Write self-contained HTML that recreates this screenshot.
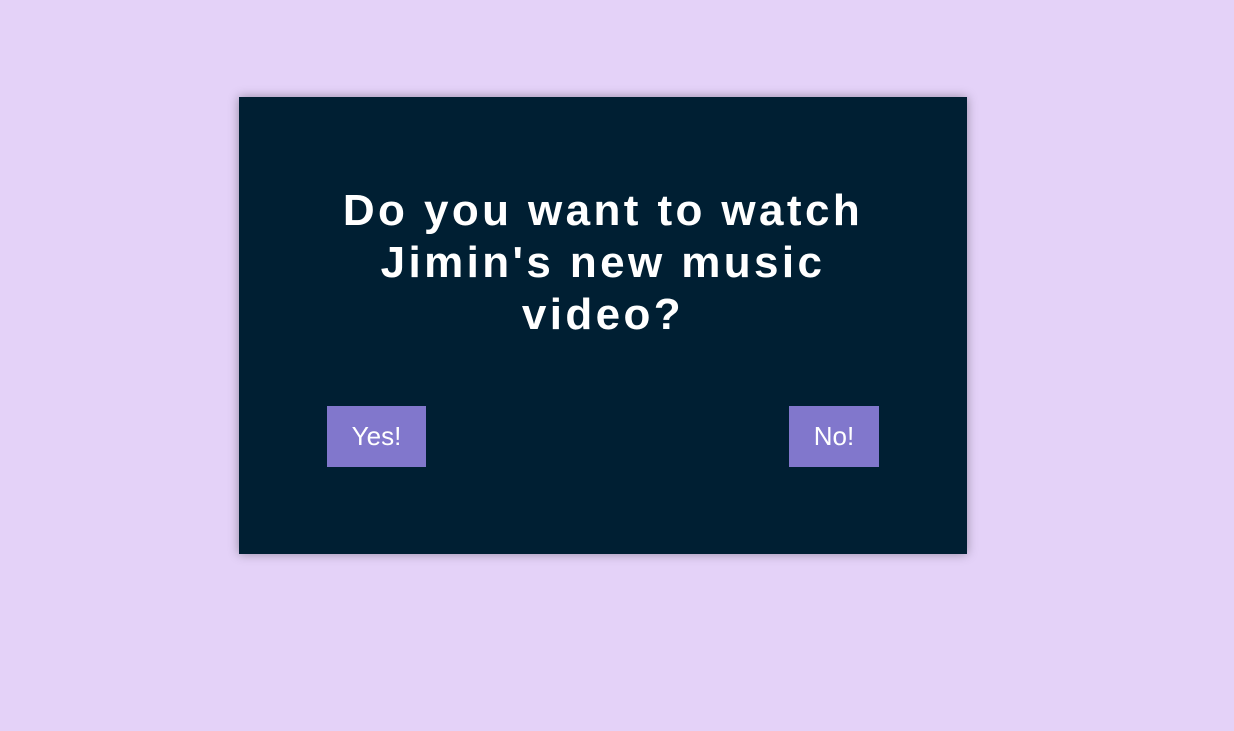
<!DOCTYPE html>
<html><head><style>
html,body{margin:0;padding:0;width:1234px;height:731px;background:#e4d2f8;overflow:hidden}
.card{position:absolute;left:239px;top:97px;width:728px;height:457px;background:#001f33;box-shadow:0 0 10px rgba(0,0,0,0.35)}
h1{position:absolute;left:0;top:88px;width:728px;margin:0;text-align:center;color:#fff;font:bold 44px/52px "Liberation Sans",sans-serif;letter-spacing:3.4px}
.btn{position:absolute;top:309px;height:61px;background:#8177cc;color:#fff;font:26px/61px "Liberation Sans",sans-serif;text-align:center}
</style></head><body>
<div class="card">
<h1>Do you want to watch<br>Jimin's new music<br>video?</h1>
<div class="btn" style="left:88px;width:99px">Yes!</div>
<div class="btn" style="left:550px;width:90px">No!</div>
</div>
</body></html>
